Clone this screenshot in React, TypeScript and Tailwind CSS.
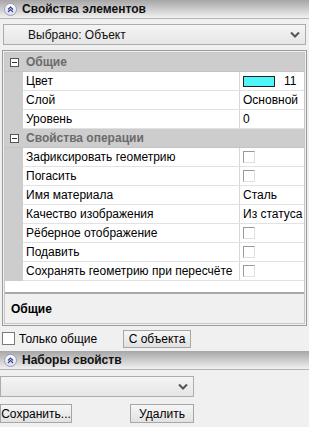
import React from "react";

const font = { fontFamily: '"Liberation Sans", Tahoma, sans-serif' };

function Chevron({ className = "" }: { className?: string }) {
  return (
    <svg width="10" height="7" viewBox="0 0 10 7" className={className}>
      <path d="M1 1.5 L5 5.5 L9 1.5" stroke="#555" strokeWidth="2" fill="none" />
    </svg>
  );
}

function PanelHeader({ title }: { title: string }) {
  return (
    <div className="h-[19px] flex items-center gap-[5px] pl-[4px] bg-gradient-to-b from-[#a6a6a6] to-[#f2f2f2] border-b border-[#b4b4b4]">
      <span className="w-[13px] h-[13px] rounded-full bg-gradient-to-b from-white to-[#dcdcec] border border-[#9aa0b8] flex items-center justify-center">
        <svg width="7" height="7" viewBox="0 0 7 7">
          <path d="M1 3.5 L3.5 1 L6 3.5 M1 6 L3.5 3.5 L6 6" stroke="#33408a" strokeWidth="1.1" fill="none" />
        </svg>
      </span>
      <span className="text-[12px] font-bold text-[#111]">{title}</span>
    </div>
  );
}

function Check() {
  return <span className="block w-[12px] h-[12px] border border-[#9a9a9a] border-r-[#e0e0e0] border-b-[#e0e0e0] bg-white" />;
}

type Row = { label: string; value?: string; check?: boolean; color?: boolean };

const general: Row[] = [
  { label: "Цвет", color: true },
  { label: "Слой", value: "Основной" },
  { label: "Уровень", value: "0" },
];

const ops: Row[] = [
  { label: "Зафиксировать геометрию", check: true },
  { label: "Погасить", check: true },
  { label: "Имя материала", value: "Сталь" },
  { label: "Качество изображения", value: "Из статуса" },
  { label: "Рёберное отображение", check: true },
  { label: "Подавить", check: true },
  { label: "Сохранять геометрию при пересчёте", check: true },
];

function Section({ title }: { title: string }) {
  return (
    <div className="h-[19px] flex items-center bg-[#cdcdcd] border-b border-[#c4c4c4]">
      <span className="w-[18px] shrink-0 flex justify-center">
        <span className="w-[9px] h-[9px] border border-[#555] bg-white flex items-center justify-center">
          <span className="w-[5px] h-px bg-[#333]" />
        </span>
      </span>
      <span className="ml-[3px] text-[12px] font-bold text-[#6b6b6b]">{title}</span>
    </div>
  );
}

function PropRow({ r }: { r: Row }) {
  return (
    <div className="h-[19px] flex bg-[#cdcdcd]">
      <div className="w-[18px] shrink-0" />
      <div className="flex-1 min-w-0 flex bg-white border-b border-[#e2e2e2]">
        <div className="w-[217px] shrink-0 pl-[3px] flex items-center text-[12px] text-black whitespace-nowrap overflow-hidden border-r border-[#d8d8d8]">
          {r.label}
        </div>
        <div className="flex-1 min-w-0 pl-[3px] flex items-center text-[12px] text-black whitespace-nowrap overflow-hidden">
          {r.color && (
            <>
              <span className="w-[32px] h-[11px] shrink-0 bg-[#4ff6f8] border border-[#222]" />
              <span className="ml-[9px]">11</span>
            </>
          )}
          {r.value}
          {r.check && <Check />}
        </div>
      </div>
    </div>
  );
}

export default function App() {
  return (
    <div className="w-[309px] h-[427px] bg-[#f0f0f0] overflow-hidden" style={font}>
      <PanelHeader title="Свойства элементов" />
      <div className="px-[3px] pt-[5px]">
        <div className="h-[21px] flex items-center justify-between border border-[#acacac] bg-gradient-to-b from-[#f4f4f4] to-[#e6e6e6] pl-[24px] pr-[5px]">
          <span className="text-[12px] text-[#111]">Выбрано: Объект</span>
          <Chevron />
        </div>
      </div>
      <div className="mx-[2px] mt-[5px] border border-[#9c9c9c] p-px">
        <div className="border border-[#c8c8c8] bg-white">
          <Section title="Общие" />
          {general.map((r) => (
            <PropRow key={r.label} r={r} />
          ))}
          <Section title="Свойства операции" />
          {ops.map((r) => (
            <PropRow key={r.label} r={r} />
          ))}
          <div className="h-[11px] bg-white" />
          <div className="h-[31px] border-t-[2px] border-[#a8a8a8] bg-[#f0f0f0] pl-[6px] flex items-center">
            <span className="text-[12px] font-bold text-black">Общие</span>
          </div>
        </div>
      </div>
      <div className="h-[25px] flex items-center pl-[2px]">
        <span className="w-[13px] h-[13px] shrink-0 border border-[#7a7a7a] bg-white" />
        <span className="ml-[4px] w-[104px] text-[12px] text-black">Только общие</span>
        <span className="h-[18px] w-[68px] border border-[#a6a6a6] bg-gradient-to-b from-[#f6f6f6] to-[#e2e2e2] flex items-center justify-center text-[12px] text-black">
          С объекта
        </span>
      </div>
      <PanelHeader title="Наборы свойств" />
      <div className="pt-[6px]">
        <div className="w-[194px] h-[21px] flex items-center justify-end border border-[#acacac] bg-gradient-to-b from-[#f4f4f4] to-[#e6e6e6] pr-[5px]">
          <Chevron />
        </div>
      </div>
      <div className="mt-[7px] flex items-center">
        <span className="h-[19px] w-[72px] border border-[#a6a6a6] bg-gradient-to-b from-[#f6f6f6] to-[#e2e2e2] flex items-center justify-center text-[12px] text-black">
          Сохранить...
        </span>
        <span className="ml-[58px] h-[19px] w-[64px] border border-[#a6a6a6] bg-gradient-to-b from-[#f6f6f6] to-[#e2e2e2] flex items-center justify-center text-[12px] text-black">
          Удалить
        </span>
      </div>
    </div>
  );
}
